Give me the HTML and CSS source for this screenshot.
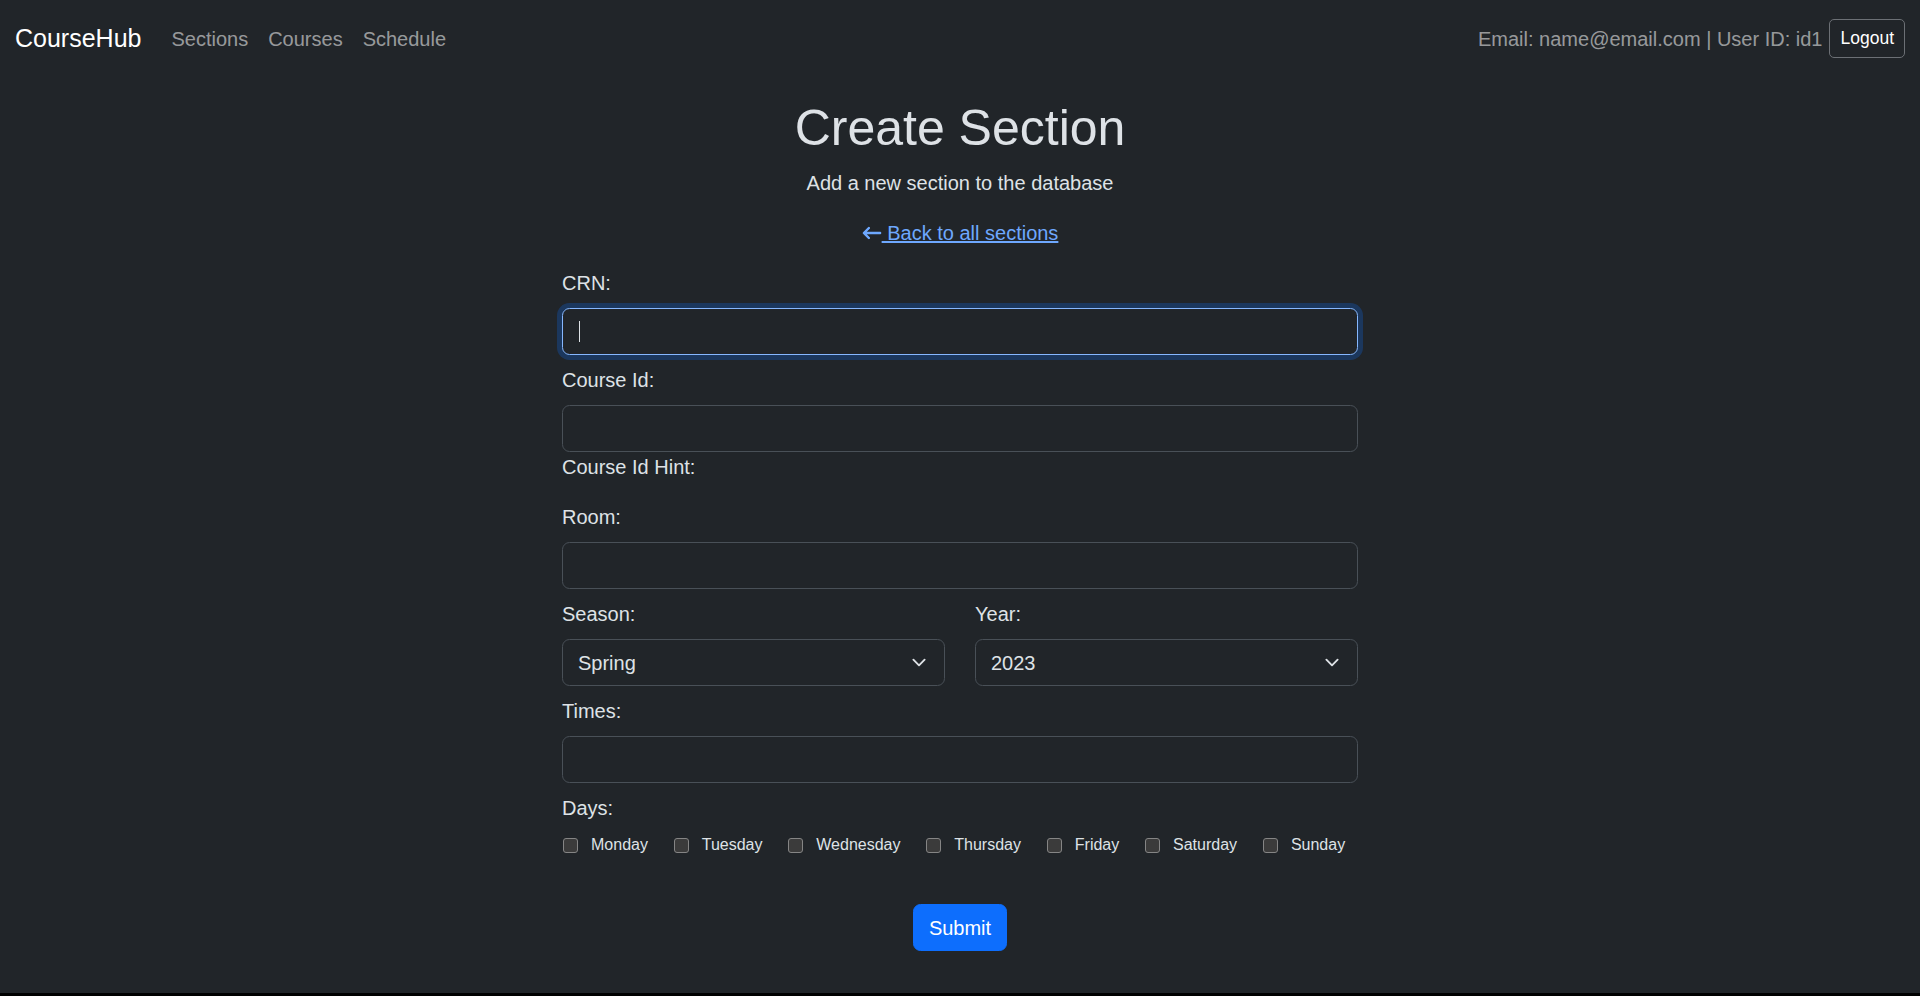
FILE: index.html
```html
<!DOCTYPE html>
<html lang="en">
<head>
<meta charset="utf-8">
<title>Create Section - CourseHub</title>
<link rel="stylesheet" href="styles.css">
</head>
<body>
<nav class="navbar">
  <div class="nav-left">
    <a class="brand" href="#">CourseHub</a>
    <ul class="nav-links">
      <li><a href="#">Sections</a></li>
      <li><a href="#">Courses</a></li>
      <li><a href="#">Schedule</a></li>
    </ul>
  </div>
  <div class="nav-right">
    <span class="user-info">Email: name@email.com | User ID: id1</span>
    <button class="btn-logout" type="button">Logout</button>
  </div>
</nav>
<main class="page">
  <h1 class="title">Create Section</h1>
  <p class="lead">Add a new section to the database</p>
  <p class="back"><a href="#"><svg class="arrow" viewBox="0 0 16 16" width="20" height="20" fill="currentColor" stroke="currentColor" stroke-width="0.9" stroke-linejoin="round"><path fill-rule="evenodd" d="M15 8a.5.5 0 0 0-.5-.5H2.707l3.147-3.146a.5.5 0 1 0-.708-.708l-4 4a.5.5 0 0 0 0 .708l4 4a.5.5 0 0 0 .708-.708L2.707 8.5H14.5A.5.5 0 0 0 15 8"/></svg> Back to all sections</a></p>
  <form class="form">
    <div class="group">
      <label class="form-label" for="crn">CRN:</label>
      <div class="input-wrap">
        <input class="form-control focused" id="crn" type="text">
        <span class="caret"></span>
      </div>
    </div>
    <div class="group">
      <label class="form-label" for="course">Course Id:</label>
      <input class="form-control" id="course" type="text">
      <label class="form-label">Course Id Hint:</label>
    </div>
    <div class="group">
      <label class="form-label" for="room">Room:</label>
      <input class="form-control" id="room" type="text">
    </div>
    <div class="group two-col">
      <div>
        <label class="form-label" for="season">Season:</label>
        <select class="form-control form-select" id="season">
          <option>Spring</option>
          <option>Summer</option>
          <option>Fall</option>
        </select>
      </div>
      <div>
        <label class="form-label" for="year">Year:</label>
        <select class="form-control form-select" id="year">
          <option>2023</option>
          <option>2024</option>
        </select>
      </div>
    </div>
    <div class="group">
      <label class="form-label" for="times">Times:</label>
      <input class="form-control" id="times" type="text">
    </div>
    <div class="group">
      <label class="form-label">Days:</label>
      <div class="days">
        <label class="day"><input type="checkbox">Monday</label>
        <label class="day"><input type="checkbox">Tuesday</label>
        <label class="day"><input type="checkbox">Wednesday</label>
        <label class="day"><input type="checkbox">Thursday</label>
        <label class="day"><input type="checkbox">Friday</label>
        <label class="day"><input type="checkbox">Saturday</label>
        <label class="day"><input type="checkbox">Sunday</label>
      </div>
    </div>
    <div class="submit-wrap">
      <button class="btn-submit" type="submit">Submit</button>
    </div>
  </form>
</main>
</body>
</html>
```
FILE: styles.css
```css
html {
  background: #000;
  font-size: 20px;
}
body {
  margin: 0;
  height: 993px;
  background: #212529;
  color: #dee2e6;
  font-family: "Liberation Sans", Arial, sans-serif;
  font-size: 20px;
  line-height: 1.5;
}
.navbar {
  display: flex;
  justify-content: space-between;
  align-items: center;
  padding: 13.5px 15px;
}
.nav-left {
  display: flex;
  align-items: center;
}
.brand {
  font-size: 25px;
  line-height: 37.5px;
  padding: 6.25px 0;
  margin-right: 20px;
  color: #fff;
  text-decoration: none;
}
.nav-links {
  display: flex;
  list-style: none;
  margin: 0;
  padding: 0;
}
.nav-links a {
  display: block;
  padding: 10px;
  line-height: 30px;
  color: rgba(255, 255, 255, 0.55);
  text-decoration: none;
}
.nav-right {
  display: flex;
  align-items: center;
}
.user-info {
  color: rgba(255, 255, 255, 0.55);
  margin-right: 7px;
}
.btn-logout {
  font-family: inherit;
  font-size: 17.5px;
  line-height: 26.25px;
  padding: 5px 10px;
  border: 1px solid #6c7075;
  border-radius: 5px;
  background: transparent;
  color: #fff;
}
.page {
  width: 796px;
  margin: 21px auto 0;
}
.title {
  font-size: 50px;
  line-height: 1.2;
  font-weight: 500;
  margin: 0 0 10px;
  text-align: center;
  color: #dee2e6;
}
.lead {
  margin: 0 0 20px;
  text-align: center;
}
.back {
  margin: 0 0 20px;
  text-align: center;
}
.back a {
  color: #6ea8fe;
}
.arrow {
  display: inline-block;
  width: 20px;
  height: 20px;
  vertical-align: -0.125em;
}
.form {
  margin: 0;
}
.group {
  display: flow-root;
  margin-bottom: 10px;
}
.form-label {
  display: block;
  margin-bottom: 10px;
}
.input-wrap {
  position: relative;
}
.caret {
  position: absolute;
  left: 17px;
  top: 13px;
  width: 1px;
  height: 21px;
  background: #dee2e6;
}
.form-control {
  display: block;
  width: 100%;
  box-sizing: border-box;
  margin: 0;
  padding: 7.5px 15px;
  font-family: inherit;
  font-size: 20px;
  line-height: 30px;
  height: 47px;
  color: #dee2e6;
  background-color: #212529;
  border: 1px solid #495057;
  border-radius: 7.5px;
  outline: none;
  caret-color: #dee2e6;
}
.form-control.focused,
.form-control:focus {
  border-color: #86b7fe;
  box-shadow: 0 0 0 5px rgba(13, 110, 253, 0.25);
}
.form-select {
  appearance: none;
  -webkit-appearance: none;
  padding-right: 45px;
  background-image: url("data:image/svg+xml,%3csvg xmlns='http://www.w3.org/2000/svg' viewBox='0 0 16 16'%3e%3cpath fill='none' stroke='%23dee2e6' stroke-linecap='round' stroke-linejoin='round' stroke-width='2' d='m2 5 6 6 6-6'/%3e%3c/svg%3e");
  background-repeat: no-repeat;
  background-position: right 15px center;
  background-size: 20px 15px;
}
.two-col {
  display: grid;
  grid-template-columns: 1fr 1fr;
  column-gap: 30px;
}
.days {
  display: flex;
  align-items: center;
}
.day {
  display: flex;
  align-items: center;
  margin-right: 24.8px;
  font-size: 16px;
  line-height: 24px;
}
.day input {
  appearance: none;
  -webkit-appearance: none;
  width: 15px;
  height: 15px;
  box-sizing: border-box;
  margin: 0 13px 0 1px;
  background: #3b3b3b;
  border: 1px solid #858585;
  border-radius: 3px;
}
.submit-wrap {
  text-align: center;
  margin-top: 47px;
}
.btn-submit {
  font-family: inherit;
  font-size: 20px;
  line-height: 30px;
  padding: 7.5px 15px;
  border: 1px solid #0d6efd;
  border-radius: 7.5px;
  background: #0d6efd;
  color: #fff;
}
```
